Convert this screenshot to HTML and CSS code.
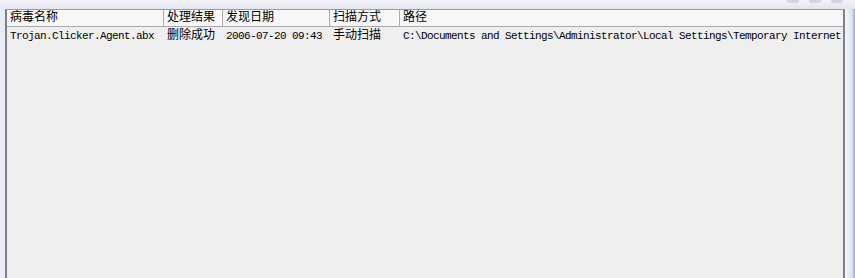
FILE: index.html
```html
<!DOCTYPE html>
<html lang="zh-CN">
<head>
  <meta charset="UTF-8" />
  <title>病毒记录</title>
  <link rel="stylesheet" href="styles.css">
</head>
<body>
  <div class="window">
    <div class="top-strip">
      <span class="knob"></span><span class="knob"></span><span class="knob"></span>
    </div>
    <div class="content">
      <div class="list">
        <div class="head">
          <div class="col c1 cjk">病毒名称</div>
          <div class="col c2 cjk">处理结果</div>
          <div class="col c3 cjk">发现日期</div>
          <div class="col c4 cjk">扫描方式</div>
          <div class="col c5 cjk">路径</div>
        </div>
        <div class="row">
          <div class="cell c1">Trojan.Clicker.Agent.abx</div>
          <div class="cell c2 cjk">删除成功</div>
          <div class="cell c3">2006-07-20 09:43</div>
          <div class="cell c4 cjk">手动扫描</div>
          <div class="cell c5">C:\Documents and Settings\Administrator\Local Settings\Temporary Internet</div>
        </div>
      </div>
      <div class="edge"></div>
    </div>
  </div>
</body>
</html>
```

FILE: styles.css
```css
html, body {
  margin: 0;
  height: 100%;
}
body {
  background: #ebebf3;
  font-family: "Liberation Mono", "Noto Sans CJK SC", monospace;
  font-size: 11px;
  letter-spacing: -0.6px;
  color: #000;
  overflow: hidden;
}
.window {
  display: flex;
  flex-direction: column;
  height: 278px;
}
.top-strip {
  height: 9px;
  background: linear-gradient(#f2f2f7, #e4e6ef);
  display: flex;
  justify-content: flex-end;
  gap: 10px;
  padding-right: 12px;
}
.knob {
  width: 12px;
  height: 3px;
  border-radius: 0 0 6px 6px;
  background: #d2d4dc;
}
.content {
  flex: 1;
  display: flex;
  padding-left: 5px;
}
.list {
  width: 836px;
  background: #efefef;
  border-left: 2px solid #7f8186;
  border-right: 2px solid #7f8186;
  border-top: 1px solid #9a9ca4;
  overflow: hidden;
}
.edge {
  flex: 1;
  background: linear-gradient(90deg, #f6f6fc, #e0e2f2 70%, #9aa6c8);
}
.head, .row {
  display: flex;
  white-space: nowrap;
}
.head {
  height: 16px;
  background: #f7f7f7;
  border-bottom: 1px solid #a9a9ad;
}
.col {
  box-sizing: border-box;
  padding-left: 3px;
  line-height: 16px;
  border-right: 1px solid #a9a9ad;
  box-shadow: inset -1px 0 0 #fff;
  flex-shrink: 0;
}
.col.c5 {
  border-right: none;
  box-shadow: none;
}
.row {
  height: 16px;
  margin-top: 1px;
}
.cell {
  box-sizing: border-box;
  padding-left: 3px;
  line-height: 16px;
  flex-shrink: 0;
}
.cjk {
  font-size: 12px;
  letter-spacing: 0;
}
.c1 { width: 157px; }
.c2 { width: 59px; }
.c3 { width: 107px; }
.c4 { width: 70px; }
.c5 { flex: 1; }
```
